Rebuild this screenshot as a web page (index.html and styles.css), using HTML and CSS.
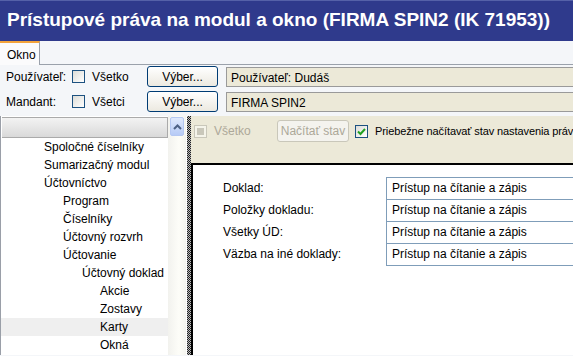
FILE: index.html
```
<!DOCTYPE html>
<html lang="sk">
<head>
    <meta charset="UTF-8">
    <title>Prístupové práva na modul a okno</title>
    <link rel="stylesheet" href="styles.css">
</head>
<body>
    <div class="titlebar">Prístupové práva na modul a okno (FIRMA SPIN2 (IK 71953))</div>

    <div class="tabstrip">
        <div class="tab">Okno</div>
        <div class="tab-rest"></div>
    </div>

    <div class="filters">
        <div class="filter-row">
            <span class="lbl">Používateľ:</span>
            <span class="check"></span>
            <span class="check-lbl">Všetko</span>
            <button class="btn">Výber...</button>
            <div class="field">Používateľ: Dudáš</div>
        </div>
        <div class="filter-row">
            <span class="lbl">Mandant:</span>
            <span class="check"></span>
            <span class="check-lbl">Všetci</span>
            <button class="btn">Výber...</button>
            <div class="field">FIRMA SPIN2</div>
        </div>
    </div>

    <div class="main">
        <div class="tree">
            <div class="tree-list">
                <div class="tree-head"></div>
                <div class="node l1">Spoločné číselníky</div>
                <div class="node l1">Sumarizačný modul</div>
                <div class="node l1">Účtovníctvo</div>
                <div class="node l2">Program</div>
                <div class="node l2">Číselníky</div>
                <div class="node l2">Účtovný rozvrh</div>
                <div class="node l2">Účtovanie</div>
                <div class="node l3">Účtovný doklad</div>
                <div class="node l4">Akcie</div>
                <div class="node l4">Zostavy</div>
                <div class="node l4 selected">Karty</div>
                <div class="node l4">Okná</div>
            </div>
            <div class="scrollbar">
                <div class="scroll-btn">
                    <svg width="9" height="6" viewBox="0 0 9 6"><path d="M1 5 L4.5 1.5 L8 5" fill="none" stroke="#4d6185" stroke-width="2"/></svg>
                </div>
                <div class="scroll-track"></div>
            </div>
        </div>
        <div class="splitter"></div>
        <div class="detail">
            <div class="toolbar">
                <span class="check disabled"><span class="dot"></span></span>
                <span class="check-lbl muted">Všetko</span>
                <button class="btn btn-disabled">Načítať stav</button>
                <span class="check checked">
                    <svg width="9" height="9" viewBox="0 0 9 9"><path d="M1 4.5 L3.5 7 L8 2" fill="none" stroke="#21a121" stroke-width="2"/></svg>
                </span>
                <span class="check-lbl live">Priebežne načítavať stav nastavenia práv</span>
            </div>
            <div class="sheet">
                <div class="rights">
                    <span class="r-lbl">Doklad:</span>
                    <div class="r-val">Prístup na čítanie a zápis</div>
                    <span class="r-lbl">Položky dokladu:</span>
                    <div class="r-val">Prístup na čítanie a zápis</div>
                    <span class="r-lbl">Všetky ÚD:</span>
                    <div class="r-val">Prístup na čítanie a zápis</div>
                    <span class="r-lbl">Väzba na iné doklady:</span>
                    <div class="r-val">Prístup na čítanie a zápis</div>
                </div>
            </div>
        </div>
    </div>
</body>
</html>
```

FILE: styles.css
```
html, body {
    margin: 0;
    padding: 0;
    width: 573px;
    height: 356px;
    overflow: hidden;
    font-family: 'Liberation Sans', Arial, sans-serif;
    font-size: 11px;
    color: #000;
    background: #f4f6f9;
}
.titlebar {
    height: 41px;
    box-sizing: border-box;
    border-top: 1px solid #5561a8;
    background: #2f3a8c;
    color: #fff;
    font-weight: bold;
    font-size: 19px;
    padding: 8px 0 0 7px;
    white-space: nowrap;
}
.tabstrip {
    display: flex;
    height: 24px;
    background: #f4f6f9;
}
.tab {
    width: 40px;
    box-sizing: border-box;
    border-top: 2px solid #f3a33b;
    border-right: 1px solid #9aa1ab;
    background: #fbfbfc;
    padding: 5px 0 0 7px;
    font-size: 12px;
}
.tab-rest {
    flex: 1;
    border-bottom: 1px solid #9aa1ab;
}
.filters {
    display: flex;
    flex-direction: column;
    gap: 4px;
    padding-top: 1px;
    height: 51px;
    box-sizing: border-box;
}
.filter-row {
    display: flex;
    align-items: center;
    height: 21px;
    font-size: 12px;
}
.lbl {
    width: 72px;
    padding-left: 6px;
    box-sizing: border-box;
}
.check {
    width: 11px;
    height: 11px;
    border: 1px solid #1c5180;
    background: linear-gradient(135deg, #dcdcd7, #fff);
    display: inline-flex;
    align-items: center;
    justify-content: center;
    flex-shrink: 0;
}
.check-lbl {
    margin-left: 7px;
    width: 50px;
    flex-shrink: 0;
}
.btn {
    height: 21px;
    width: 71px;
    margin-left: 5px;
    border: 1px solid #003c74;
    border-radius: 3px;
    background: linear-gradient(#ffffff, #ece9e0);
    font-family: inherit;
    font-size: 12px;
    padding: 0;
    flex-shrink: 0;
}
.field {
    flex: 1;
    margin-left: 8px;
    height: 20px;
    box-sizing: border-box;
    border: 1px solid #9a9a9a;
    border-right: none;
    background: #ece9d8;
    padding: 3px 0 0 4px;
}
.main {
    display: flex;
    height: 239px;
}
.tree {
    display: flex;
    width: 186px;
    background: #fff;
    border-left: 1px solid #9a9fa8;
    box-sizing: border-box;
}
.tree-list {
    flex: 1;
    padding-top: 1px;
}
.tree-head {
    height: 19px;
    margin-left: 1px;
    border: 1px solid #aaa;
    border-left: none;
    background: linear-gradient(#f3f3f3, #d9d9d9);
}
.node {
    height: 18px;
    line-height: 18px;
    font-size: 12px;
    white-space: nowrap;
}
.l1 { padding-left: 43px; }
.l2 { padding-left: 62px; }
.l3 { padding-left: 81px; }
.l4 { padding-left: 99px; }
.node.selected {
    background: #efefef;
}
.scrollbar {
    width: 18px;
    display: flex;
    flex-direction: column;
    background: linear-gradient(90deg, #f2f2ee, #fdfdf8 60%, #f5f5ef);
}
.scroll-btn {
    margin: 1px 2px 0 2px;
    height: 17px;
    border: 1px solid #b5c8f2;
    border-radius: 2px;
    background: linear-gradient(#dfe9fd, #b7cbf6);
    display: flex;
    align-items: center;
    justify-content: center;
}
.splitter {
    width: 4px;
    border-left: 1px solid #fff;
    background: repeating-conic-gradient(#222 0 25%, #bbb 0 50%) 0 0 / 2px 2px;
}
.detail {
    flex: 1;
    display: flex;
    flex-direction: column;
    background: #ece9d8;
    min-width: 0;
}
.toolbar {
    height: 47px;
    display: flex;
    align-items: center;
    padding: 4px 0 21px 3px;
    box-sizing: border-box;
    font-size: 12px;
    white-space: nowrap;
    overflow: hidden;
}
.check.disabled {
    border-color: #c9c7ba;
    background: #f5f4ea;
}
.dot {
    width: 7px;
    height: 7px;
    background: #c9c7ba;
}
.muted {
    color: #aca899;
    width: 57px;
}
.btn-disabled {
    margin-left: 6px;
    width: 72px;
    height: 22px;
    border-color: #c9c7ba;
    background: #f4f3ee;
    color: #aca899;
}
.check.checked {
    margin-left: 6px;
    border-color: #1c5180;
    background: linear-gradient(135deg, #dcdcd7, #fff);
}
.live {
    width: auto;
    margin-left: 7px;
    font-size: 11px;
    letter-spacing: -0.1px;
}
.sheet {
    flex: 1;
    background: #fff;
    border-top: 2px solid #000;
    border-left: 2px solid #000;
    padding: 12px 0 0 30px;
}
.rights {
    display: grid;
    grid-template-columns: 163px 1fr;
    grid-auto-rows: 22px;
    font-size: 12px;
}
.r-lbl {
    padding-top: 4px;
}
.r-val {
    border: 1px solid #7f9db9;
    border-right: none;
    margin-bottom: -1px;
    padding: 3px 0 0 5px;
    background: #fff;
}
```
